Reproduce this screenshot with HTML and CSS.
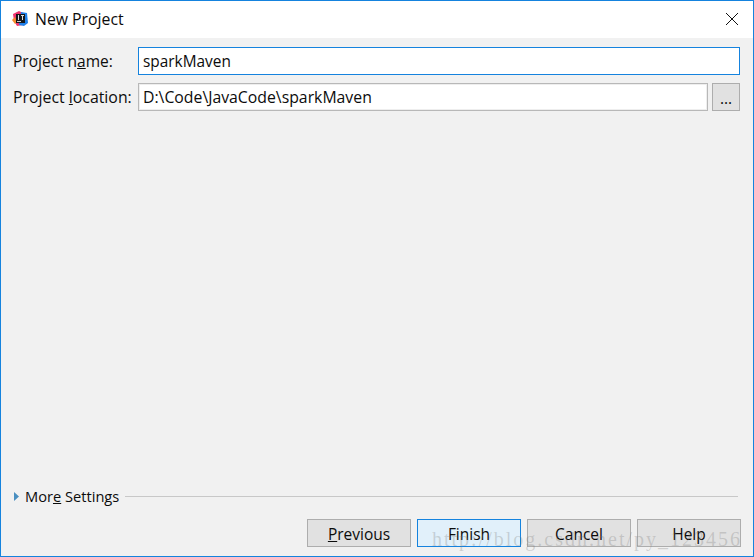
FILE: index.html
```html
<!DOCTYPE html>
<html lang="en">
<head>
<meta charset="utf-8">
<title>New Project</title>
<link rel="stylesheet" href="styles.css">
</head>
<body>
<div class="dialog">
  <header class="titlebar">
    <svg class="app-icon" width="16" height="16" viewBox="0 0 16 16" aria-hidden="true">
      <path d="M1 3 L7 0 L11 2 L11 14 L5 15 L2 10 Z" fill="#f0346e"/>
      <path d="M0 9 L3 6 L5 11 L3 13 Z" fill="#f58a2c"/>
      <path d="M9 1 L15 2 L16 12 L12 15 L7 14 Z" fill="#1f7fe8"/>
      <rect x="4" y="3" width="9" height="9" fill="#14171c"/>
      <rect x="5" y="10" width="4" height="1" fill="#ccc"/>
      <rect x="6" y="4" width="1" height="5" fill="#ddd"/>
      <rect x="9" y="4" width="3" height="1" fill="#ddd"/>
      <rect x="10" y="4" width="1" height="5" fill="#ddd"/>
    </svg>
    <span class="title">New Project</span>
    <svg class="close" width="12" height="12" viewBox="0 0 12 12" aria-hidden="true">
      <path d="M0 0 L12 12 M12 0 L0 12" stroke="#111" stroke-width="1" fill="none"/>
    </svg>
  </header>
  <main class="content">
    <div class="form">
      <label class="label label-name">Project n<u>a</u>me:</label>
      <div class="input input-focus">sparkMaven</div>
      <label class="label">Project <u>l</u>ocation:</label>
      <div class="input input-path">D:\Code\JavaCode\sparkMaven</div>
      <button class="btn btn-browse">...</button>
    </div>
    <div class="spacer"></div>
    <div class="more">
      <svg class="arrow" width="5" height="9" viewBox="0 0 5 9" aria-hidden="true"><path d="M0 0 L5 4.5 L0 9 Z" fill="#4a8fc0"/></svg>
      <span class="more-label">Mor<u>e</u> Settings</span>
      <span class="rule"></span>
    </div>
    <footer class="actions">
      <button class="btn"><u>P</u>revious</button>
      <button class="btn btn-primary">Finish</button>
      <button class="btn">Cancel</button>
      <button class="btn">Help</button>
    </footer>
  </main>
  <div class="watermark">http://blog.csdn.net/py_123456</div>
</div>
</body>
</html>
```
FILE: styles.css
```css
* { box-sizing: border-box; }
html, body { margin: 0; padding: 0; width: 754px; height: 557px; overflow: hidden; }
body { font-family: "Open Sans", "Noto Sans", "Liberation Sans", sans-serif; font-size: 15.5px; color: #0c0c0c; }
.dialog { position: relative; width: 754px; height: 557px; border: 1px solid #1583de; background: #f1f1f1; display: flex; flex-direction: column; }
.titlebar { height: 37px; background: #fff; display: flex; align-items: center; padding: 0 15px 1px 11px; flex: none; }
.app-icon { flex: none; margin-right: 7px; }
.title { font-size: 15.8px; flex: 1; }
.close { flex: none; }
.content { flex: 1; display: flex; flex-direction: column; padding: 9px 12px 9px 12px; min-height: 0; }
.form { display: grid; grid-template-columns: 125px 1fr 28px; grid-template-rows: 28px 28px; row-gap: 8px; align-items: center; margin-right: 1px; }
.input-focus { grid-column: 2 / 4; }
.label { white-space: nowrap; font-size: 15.85px; }
.label-name { font-size: 15.5px; }
.input { height: 28px; background: #fff; border: 1px solid #b8b8b8; display: flex; align-items: center; padding: 0 4px; font-size: 15.8px; }
.input-path { margin-right: 4px; box-shadow: inset 0 0 0 1px #eeeeee; }
.input-focus { border-color: #1583de; font-size: 15.4px; }
.btn { font: inherit; color: #0c0c0c; background: #e1e1e1; border: 1px solid #adadad; width: 104px; height: 28px; padding: 1px 0 0; }
.btn-browse { width: 28px; height: 28px; line-height: 1; padding-top: 3px; }
.btn-primary { background: #e1f0fa; border-color: #1583de; }
.spacer { flex: 1; }
.more { display: flex; align-items: center; gap: 6px; height: 20px; margin-bottom: 13px; margin-right: 3px; }
.arrow { flex: none; margin-left: 1px; margin-right: 0; }
.more-label { white-space: nowrap; font-size: 14.65px; }
.rule { flex: 1; height: 1px; background: #c8c8c8; }
.actions { display: flex; justify-content: flex-end; gap: 6px; }
.watermark { position: absolute; left: 431px; bottom: 5px; font-family: "Liberation Serif", serif; font-size: 20px; letter-spacing: 2px; color: rgba(120,120,120,0.28); white-space: nowrap; pointer-events: none; }
```
